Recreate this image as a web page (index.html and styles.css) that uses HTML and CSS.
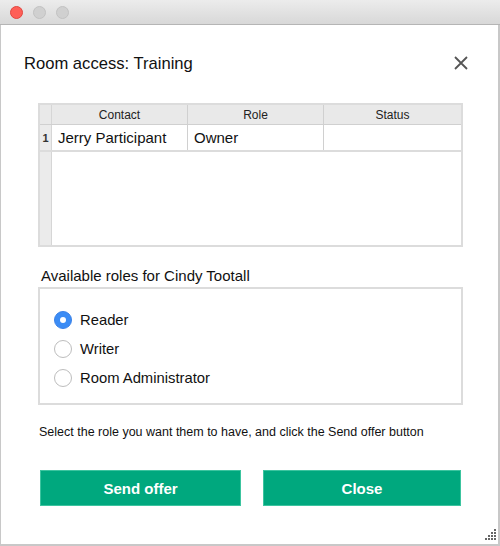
FILE: index.html
```html
<!DOCTYPE html>
<html>
<head>
<meta charset="utf-8">
<link rel="stylesheet" href="styles.css">
</head>
<body>
<div class="window">
  <div class="titlebar">
    <span class="light red"></span>
    <span class="light gray"></span>
    <span class="light gray"></span>
  </div>
  <div class="content">
    <div class="header">
      <h1 class="title">Room access: Training</h1>
      <svg class="close-x" width="14" height="14" viewBox="0 0 14 14"><path d="M1 1L13 13M13 1L1 13" stroke="#555" stroke-width="1.8" fill="none"/></svg>
    </div>
    <div class="table">
      <div class="row head">
        <div class="num"></div>
        <div class="cell">Contact</div>
        <div class="cell">Role</div>
        <div class="cell last">Status</div>
      </div>
      <div class="row data">
        <div class="num">1</div>
        <div class="cell">Jerry Participant</div>
        <div class="cell">Owner</div>
        <div class="cell last"></div>
      </div>
      <div class="row filler">
        <div class="num"></div>
        <div class="blank"></div>
      </div>
    </div>
    <div class="group-label">Available roles for Cindy Tootall</div>
    <div class="group">
      <label class="radio"><span class="dot checked"></span>Reader</label>
      <label class="radio"><span class="dot"></span>Writer</label>
      <label class="radio"><span class="dot"></span>Room Administrator</label>
    </div>
    <p class="hint">Select the role you want them to have, and click the Send offer button</p>
    <div class="buttons">
      <button class="btn">Send offer</button>
      <button class="btn">Close</button>
    </div>
  </div>
  <svg class="grip" width="14" height="14" viewBox="0 0 14 14">
    <g fill="#666">
      <rect x="11" y="1" width="2" height="2"/>
      <rect x="8" y="4" width="2" height="2"/><rect x="11" y="4" width="2" height="2"/>
      <rect x="5" y="7" width="2" height="2"/><rect x="8" y="7" width="2" height="2"/><rect x="11" y="7" width="2" height="2"/>
      <rect x="2" y="10" width="2" height="2"/><rect x="5" y="10" width="2" height="2"/><rect x="8" y="10" width="2" height="2"/><rect x="11" y="10" width="2" height="2"/>
    </g>
  </svg>
</div>
</body>
</html>
```
FILE: styles.css
```css
html, body {
  margin: 0;
  padding: 0;
  background: #ffffff;
}
body {
  font-family: "Liberation Sans", Arial, sans-serif;
  color: #111;
}
.window {
  position: relative;
  width: 500px;
  height: 546px;
  box-sizing: border-box;
  border-left: 1px solid #c8c8c8;
  border-right: 2px solid #c8c8c8;
  border-bottom: 2px solid #c8c8c8;
  background: #fff;
}
.titlebar {
  height: 25px;
  box-sizing: border-box;
  background: linear-gradient(#ececec, #d8d8d8);
  border-bottom: 1px solid #b5b5b5;
  display: flex;
  align-items: center;
  gap: 10px;
  padding-left: 10px;
  margin-left: -1px;
  margin-right: -2px;
}
.light {
  width: 13px;
  height: 13px;
  border-radius: 50%;
  box-sizing: border-box;
}
.light.red {
  background: #fe5f57;
  border: 1px solid #e2463f;
}
.light.gray {
  background: #d0d0d0;
  border: 1px solid #c2c2c2;
}
.content {
  padding: 0 35px 0 37px;
}
.header {
  display: flex;
  justify-content: space-between;
  align-items: center;
  height: 76px;
  margin-left: -14px;
  margin-right: -5px;
}
.title {
  margin: 0;
  font-size: 16.6px;
  font-weight: normal;
  color: #111;
  padding-top: 1px;
}
.close-x {
  display: block;
}
.table {
  border: 2px solid #dcdcdc;
  height: 144px;
  box-sizing: border-box;
  display: flex;
  flex-direction: column;
  margin-top: 2px;
}
.row {
  display: flex;
}
.row.head {
  height: 20px;
  background: #e9e9e9;
  border-bottom: 1px solid #d0d0d0;
  box-sizing: border-box;
  font-size: 12px;
  color: #222;
}
.row.head .cell {
  justify-content: center;
}
.row.data {
  height: 27px;
  border-bottom: 2px solid #dcdcdc;
  box-sizing: border-box;
  font-size: 15px;
}
.row.filler {
  flex: 1;
}
.num {
  width: 12px;
  flex: none;
  background: #ebebeb;
  border-right: 1px solid #d6d6d6;
  box-sizing: border-box;
  font-size: 11px;
  font-weight: bold;
  color: #333;
  display: flex;
  align-items: center;
  justify-content: center;
}
.row.head .num {
  background: #e9e9e9;
}
.cell {
  width: 136px;
  flex: none;
  display: flex;
  align-items: center;
  padding-left: 6px;
  box-sizing: border-box;
  border-right: 1px solid #d0d0d0;
}
.row.head .cell {
  padding-left: 0;
}
.cell.last {
  border-right: none;
  flex: 1;
}
.blank {
  flex: 1;
}
.group-label {
  margin-top: 19px;
  margin-left: 3px;
  font-size: 15px;
  height: 20px;
  line-height: 20px;
}
.group {
  margin-top: 1px;
  border: 2px solid #dcdcdc;
  height: 118px;
  box-sizing: border-box;
  padding: 22px 0 0 14px;
  display: flex;
  flex-direction: column;
  gap: 12px;
}
.radio {
  display: flex;
  align-items: center;
  gap: 8px;
  font-size: 14.8px;
  height: 17px;
}
.dot {
  width: 18px;
  height: 18px;
  border-radius: 50%;
  box-sizing: border-box;
  border: 1px solid #bdbdbd;
  background: #fff;
  position: relative;
}
.dot.checked {
  background: #3b8cf5;
  border-color: #3b82e8;
}
.dot.checked::after {
  content: "";
  position: absolute;
  left: 5px;
  top: 5px;
  width: 6px;
  height: 6px;
  border-radius: 50%;
  background: #fff;
}
.hint {
  margin: 19px 0 0 1px;
  font-size: 12.5px;
  height: 16px;
  line-height: 16px;
}
.buttons {
  margin-top: 30px;
  display: flex;
  justify-content: space-between;
  padding: 0 2px 0 2px;
}
.btn {
  width: 201px;
  height: 36px;
  background: #00a87e;
  border: 1px solid #3cc49f;
  color: #fff;
  font-family: "Liberation Sans", Arial, sans-serif;
  font-weight: bold;
  font-size: 15px;
  padding: 0;
}
.btn + .btn {
  width: 198px;
}
.grip {
  position: absolute;
  right: 1px;
  bottom: 2px;
}
```
